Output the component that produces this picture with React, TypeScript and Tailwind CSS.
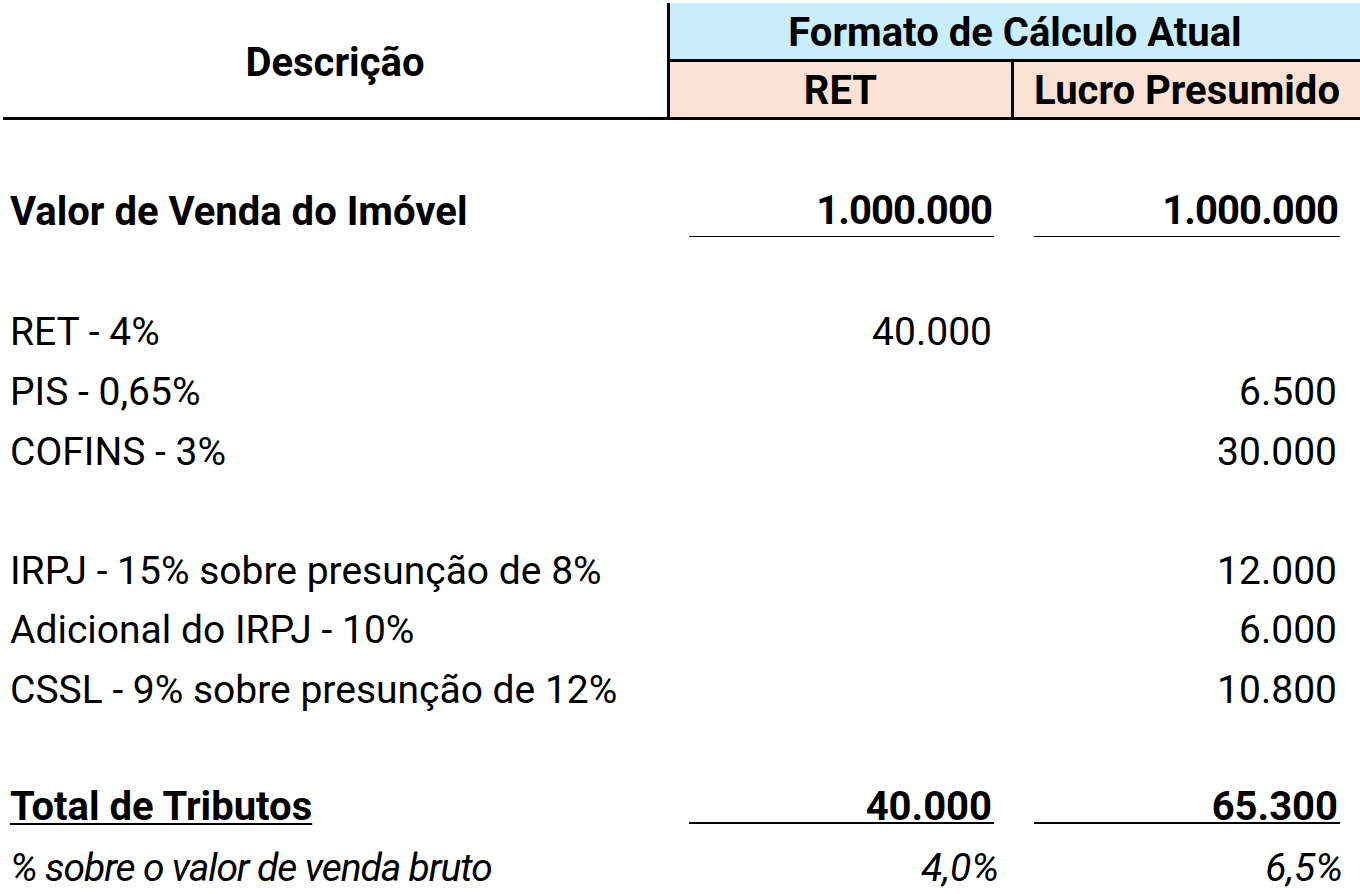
type Row = {
  label?: string;
  ret?: string;
  lucro?: string;
  kind?: "bold" | "total" | "italic" | "normal";
};

const rows: Row[] = [
  {},
  { label: "Valor de Venda do Imóvel", ret: "1.000.000", lucro: "1.000.000", kind: "bold" },
  {},
  { label: "RET - 4%", ret: "40.000" },
  { label: "PIS - 0,65%", lucro: "6.500" },
  { label: "COFINS - 3%", lucro: "30.000" },
  {},
  { label: "IRPJ - 15% sobre presunção de 8%", lucro: "12.000" },
  { label: "Adicional do IRPJ - 10%", lucro: "6.000" },
  { label: "CSSL - 9% sobre presunção de 12%", lucro: "10.800" },
  {},
  { label: "Total de Tributos", ret: "40.000", lucro: "65.300", kind: "total" },
  { label: "% sobre o valor de venda bruto", ret: "4,0%", lucro: "6,5%", kind: "italic" },
];

const NumCell = ({ value, kind, last }: { value?: string; kind?: Row["kind"]; last?: boolean }) => {
  if (kind === "bold") {
    return (
      <div className={`flex flex-col justify-end pb-[2px] ${last ? "w-[346px] pl-[20px] pr-[20px]" : "w-[344px] pl-[19px] pr-[20px]"}`}>
        <div className="border-b border-black pb-[6px] pr-[2px] text-right text-[40px] font-bold leading-[39px] tracking-[-0.9px]">{value}</div>
      </div>
    );
  }
  if (kind === "total") {
    return (
      <div className={`flex flex-col justify-end pb-[11px] ${last ? "w-[346px] pl-[20px] pr-[20px]" : "w-[344px] pl-[19px] pr-[20px]"}`}>
        <div className="border-b-2 border-black pr-[2px] text-right text-[40px] font-bold leading-[31px]">{value}</div>
      </div>
    );
  }
  if (kind === "italic") {
    return (
      <div className={`flex flex-col justify-end pb-[7px] text-right text-[39px] italic leading-[39px] ${last ? "w-[346px] pr-[17px]" : "w-[344px] pr-[15px]"}`}>
        {value}
      </div>
    );
  }
  return (
    <div className={`flex flex-col justify-end pb-[6px] text-right text-[39px] leading-[39px] ${last ? "w-[346px] pr-[23px]" : "w-[344px] pr-[22px]"}`}>
      {value}
    </div>
  );
};

const labelClass = (kind?: Row["kind"]) => {
  if (kind === "bold") return "text-[40px] font-bold pb-[8px]";
  if (kind === "total") return "text-[40px] font-bold pb-[9px]";
  if (kind === "italic") return "text-[39px] italic pb-[7px] tracking-[-1.1px]";
  return "text-[39px] pb-[6px]";
};

export default function App() {
  return (
    <div className="w-[1360px] h-[894px] overflow-hidden bg-white pt-[3px] text-black" style={{ fontFamily: "Roboto, 'Liberation Sans', sans-serif" }}>
      <div className="ml-[3px] flex h-[117px] border-b-[3px] border-black">
        <div className="flex w-[664px] items-center justify-center pt-[5px] text-[40px] font-bold">Descrição</div>
        <div className="flex flex-1 flex-col border-l-[3px] border-black">
          <div className="flex h-[56px] items-center justify-center bg-[#caedfb] pt-[3px] text-[40px] font-bold">Formato de Cálculo Atual</div>
          <div className="flex h-[58px] border-t-[3px] border-black bg-[#fbe2d5] text-[40px] font-bold">
            <div className="flex w-[341px] items-center justify-center pt-[3px]">RET</div>
            <div className="flex flex-1 items-center justify-center border-l-[3px] border-black pt-[3px]">Lucro Presumido</div>
          </div>
        </div>
      </div>
      <div className="ml-[3px] flex flex-col">
        {rows.map((r, i) => (
          <div key={i} className="flex h-[59.6px]">
            <div className={`flex w-[667px] items-end pl-[7px] leading-[39px] ${labelClass(r.kind)}`}>
              <span className={r.kind === "total" ? "underline decoration-2 underline-offset-[3px]" : ""}>{r.label}</span>
            </div>
            <NumCell value={r.ret} kind={r.kind} />
            <NumCell value={r.lucro} kind={r.kind} last />
          </div>
        ))}
      </div>
    </div>
  );
}
